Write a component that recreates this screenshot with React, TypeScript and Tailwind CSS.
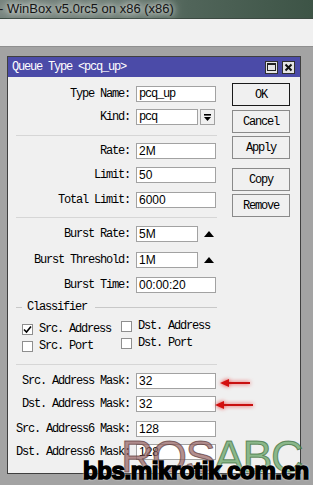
import React from "react";

const mono = "font-['Liberation_Mono',monospace] text-[12px] tracking-[-1.2px]";
const sans = "font-['Liberation_Sans',Arial,sans-serif] text-[12px]";

function Field({ label, value, mt, numeric = true, w = "w-[80px]", children }: {
  label: string; value: string; mt: string; numeric?: boolean; w?: string; children?: React.ReactNode;
}) {
  return (
    <div className={`flex items-center h-[16px] ${mt}`}>
      <div className={`w-[122px] text-right text-black ${mono}`}>{label}</div>
      <div className={`ml-[6px] h-[16px] ${w} bg-white border border-[#a2a2a2] flex items-center pl-[2px] text-black ${numeric ? sans : mono}`}>
        {value}
      </div>
      {children}
    </div>
  );
}

function Sep({ mt }: { mt: string }) {
  return <div className={`ml-[8px] w-[201px] h-px bg-[#d6d6d6] ${mt}`} />;
}

function UpTri() {
  return (
    <svg width="10" height="6" viewBox="0 0 10 6" className="ml-[6px]">
      <path d="M0 6 L5 0 L10 6 Z" fill="#000" />
    </svg>
  );
}

function Check({ checked, label }: { checked?: boolean; label: string }) {
  return (
    <div className="flex items-center">
      <div className="w-[11px] h-[11px] bg-white border border-[#8e8e8e] flex items-center justify-center">
        {checked && (
          <svg width="9" height="9" viewBox="0 0 9 9">
            <path d="M1 4.5 L3.5 7 L8 1.5" stroke="#000" strokeWidth="1.6" fill="none" />
          </svg>
        )}
      </div>
      <span className={`ml-[6px] text-black ${mono}`}>{label}</span>
    </div>
  );
}

function Btn({ label, mt, primary }: { label: string; mt: string; primary?: boolean }) {
  return (
    <div
      className={`w-[58px] h-[23px] flex items-center justify-center bg-[#f0f0f0] text-black ${mono} ${mt} ${
        primary ? "border border-[#1a1a1a]" : "border border-[#8a8a8a]"
      }`}
    >
      {label}
    </div>
  );
}

function Arrow({ top, left, len }: { top: number; left: number; len: number }) {
  return (
    <svg
      width={len + 4}
      height="12"
      viewBox={`0 0 ${len + 4} 12`}
      className="absolute drop-shadow-[0_0_2px_rgba(230,0,0,0.8)]"
      style={{ top: top - 6, left }}
    >
      <path d={`M2 6 L11 2 L11 10 Z`} fill="#d40f0f" />
      <rect x="10" y="5" width={len - 8} height="2" fill="#c81010" />
    </svg>
  );
}

export default function App() {
  return (
    <div className="relative w-[313px] h-[485px] overflow-hidden bg-[#a3a3a3]">
      {/* WinBox window title */}
      <div className="h-[18px] bg-[linear-gradient(90deg,#76847d_0%,#6c7c73_40%,#51655a_60%,#3d5446_100%)] flex items-center">
        <span className="ml-[-1px] font-['Liberation_Sans',Arial,sans-serif] text-[13px] text-[#141414] [text-shadow:0_0_6px_#fff,0_0_10px_#e8e8e8] whitespace-nowrap">
          - WinBox v5.0rc5 on x86 (x86)
        </span>
      </div>
      <div className="h-px bg-[#3c4a42]" />
      <div className="h-[28px] bg-[#f0f0f0] border-b border-[#8f8f8f]" />

      <div className="pl-[7px] pt-[9px]">
        <div className="w-[294px] h-[418px] border border-[#3f3f3f] bg-[#f0f0f0] flex flex-col">
          {/* dialog title */}
          <div className="h-[20px] bg-[#4b4ba8] flex items-center pl-[4px] pr-[5px]">
            <span className={`text-white ${mono}`}>Queue Type &lt;pcq_up&gt;</span>
            <div className="ml-auto flex gap-[4px]">
              <div className="w-[13px] h-[13px] bg-[#e4e4e4] border border-[#303030] flex items-center justify-center">
                <div className="w-[9px] h-[8px] border border-[#222] border-t-2" />
              </div>
              <div className="w-[13px] h-[13px] bg-[#e4e4e4] border border-[#303030] flex items-center justify-center">
                <svg width="9" height="9" viewBox="0 0 9 9">
                  <path d="M1.5 1.5 L7.5 7.5 M7.5 1.5 L1.5 7.5" stroke="#111" strokeWidth="2" />
                </svg>
              </div>
            </div>
          </div>

          <div className="flex">
            {/* form */}
            <div className="w-[224px] flex flex-col">
              <Field label="Type Name:" value="pcq_up" mt="mt-[9px]" numeric={false} />
              <Field label="Kind:" value="pcq" mt="mt-[7px]" numeric={false} w="w-[62px]">
                <div className="ml-[2px] w-[15px] h-[16px] bg-[#f0f0f0] border border-[#a2a2a2] flex items-center justify-center">
                  <svg width="9" height="9" viewBox="0 0 9 9">
                    <rect x="1" y="1" width="7" height="1.6" fill="#000" />
                    <path d="M1 4 L8 4 L4.5 8 Z" fill="#000" />
                  </svg>
                </div>
              </Field>
              <Sep mt="mt-[10px]" />
              <Field label="Rate:" value="2M" mt="mt-[7px]" />
              <Field label="Limit:" value="50" mt="mt-[8px]" />
              <Field label="Total Limit:" value="6000" mt="mt-[9px]" />
              <Sep mt="mt-[9px]" />
              <Field label="Burst Rate:" value="5M" mt="mt-[8px]" w="w-[62px]">
                <UpTri />
              </Field>
              <Field label="Burst Threshold:" value="1M" mt="mt-[10px]" w="w-[62px]">
                <UpTri />
              </Field>
              <Field label="Burst Time:" value="00:00:20" mt="mt-[9px]" />

              <div className="flex items-center h-[12px] mt-[8px] ml-[8px] w-[201px]">
                <div className="w-[6px] h-px bg-[#c8c8c8]" />
                <span className={`ml-[5px] text-black ${mono}`}>Classifier</span>
                <div className="ml-[8px] flex-1 h-px bg-[#c8c8c8]" />
              </div>
              <div className="flex h-[12px] mt-[7px] ml-[14px]">
                <div className="w-[99px]"><Check checked label="Src. Address" /></div>
                <Check label="Dst. Address" />
              </div>
              <div className="flex h-[12px] mt-[5px] ml-[14px]">
                <div className="w-[99px]"><Check label="Src. Port" /></div>
                <Check label="Dst. Port" />
              </div>
              <Sep mt="mt-[15px]" />
              <Field label="Src. Address Mask:" value="32" mt="mt-[8px]" />
              <Field label="Dst. Address Mask:" value="32" mt="mt-[7px]" />
              <Field label="Src. Address6 Mask:" value="128" mt="mt-[9px]" />
              <Field label="Dst. Address6 Mask:" value="128" mt="mt-[7px]" />
            </div>

            {/* buttons */}
            <div className="flex flex-col">
              <Btn label="OK" mt="mt-[6px]" primary />
              <Btn label="Cancel" mt="mt-[4px]" />
              <Btn label="Apply" mt="mt-[3px]" />
              <Btn label="Copy" mt="mt-[9px]" />
              <Btn label="Remove" mt="mt-[3px]" />
            </div>
          </div>
        </div>
      </div>

      {/* annotations */}
      <Arrow top={383} left={218} len={30} />
      <Arrow top={405} left={213} len={38} />

      {/* watermark */}
      <div className="absolute left-[121px] top-[434px] font-['Liberation_Sans',Arial,sans-serif] text-[45px] leading-none tracking-[-1.5px] whitespace-nowrap">
        <span className="text-[rgba(150,100,100,0.72)] [-webkit-text-stroke:1px_rgba(90,55,55,0.7)]">ROS</span>
        <span className="text-[rgba(105,165,105,0.75)] [-webkit-text-stroke:1px_rgba(55,105,55,0.7)]">ABC</span>
      </div>
      <div className="absolute left-[83px] top-[459px] font-['Liberation_Sans',Arial,sans-serif] font-bold text-[24px] leading-none tracking-[-0.4px] text-black whitespace-nowrap [-webkit-text-stroke:1.6px_#000] [text-shadow:0_0_2px_#fff,0_0_3px_#fff]">
        bbs.mikrotik.com.cn
      </div>
    </div>
  );
}
